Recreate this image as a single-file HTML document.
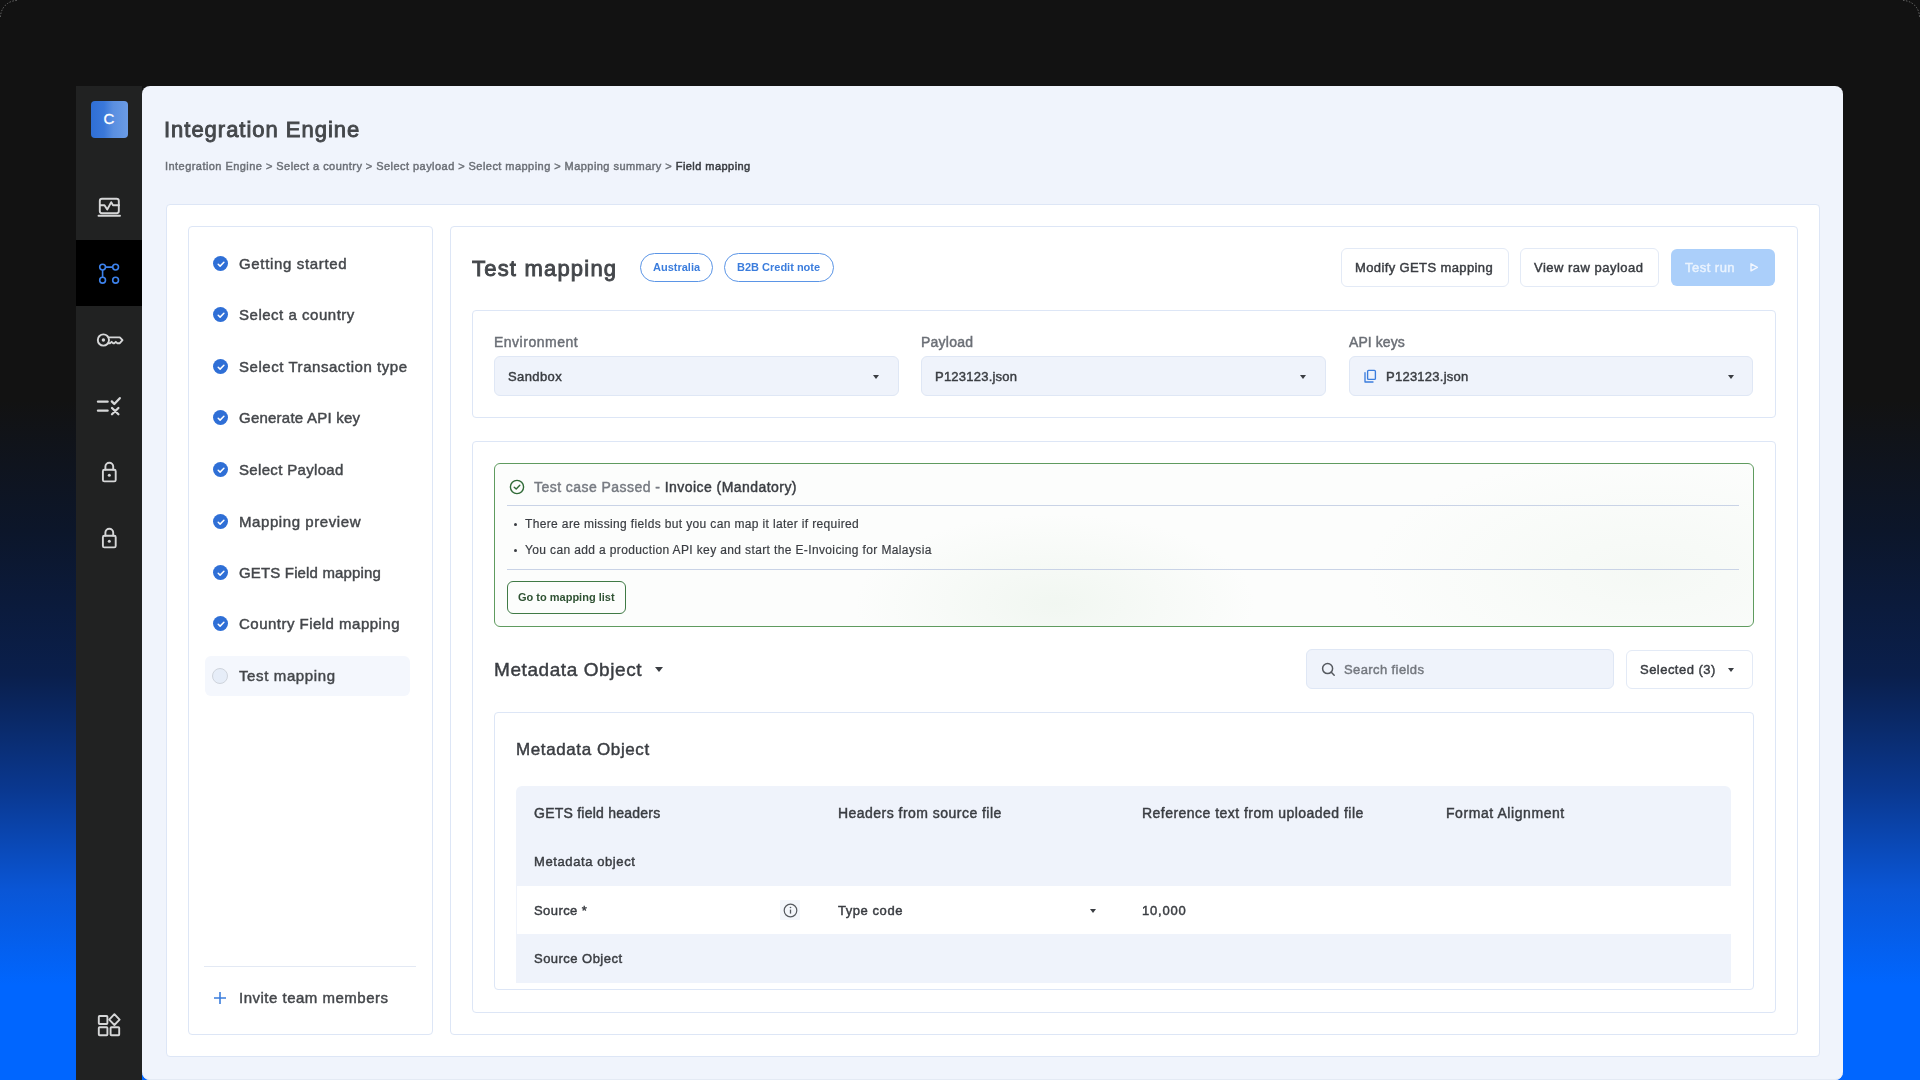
<!DOCTYPE html>
<html><head><meta charset="utf-8">
<style>
*{box-sizing:border-box;margin:0;padding:0}
html,body{width:1920px;height:1080px;overflow:hidden}
body{font-family:"Liberation Sans",sans-serif;position:relative;
background:linear-gradient(180deg,#121212 0px,#121212 400px,#0c162a 530px,#0a1f4c 675px,#0a3890 790px,#0a56d6 890px,#0066ff 985px,#0066ff 1080px);color:#404348}
.abs{position:absolute}
#sidebar{left:76px;top:86px;width:66px;height:994px;background:#212222}
#logo{left:15px;top:15px;width:37px;height:37px;border-radius:4px;background:linear-gradient(90deg,#2f6fd6 0%,#3a78da 35%,#5a8fe0 60%,#6b9ce6 100%);color:#fff;font-size:15px;-webkit-text-stroke:0.3px #fff;text-align:center;line-height:37px;text-indent:-1px}
.sicon{left:0;width:66px;height:66px;display:flex;align-items:center;justify-content:center}
#main{left:142px;top:86px;width:1701px;height:994px;background:#f0f4fc;border-radius:8px;box-shadow:inset 0 -1px 0 #e4eaf4}
.t{position:absolute;white-space:nowrap;line-height:1}
.box{position:absolute;background:#fff;border:1px solid #dde6f6;border-radius:4px}
.md{-webkit-text-stroke:0.45px currentColor}
.t{will-change:transform}
.step{position:absolute;left:239px;font-size:15px;letter-spacing:0.5px;color:#44474b}
.chk{position:absolute;left:212.5px;width:15px;height:15px;border-radius:50%;background:#2f6fd6}
.chk svg{position:absolute;left:0;top:0}
.sel{position:absolute;background:#eff3fb;border:1px solid #dfe7f5;border-radius:6px;height:40px}
.caret{position:absolute;width:0;height:0;border-left:3.6px solid transparent;border-right:3.6px solid transparent;border-top:4px solid #3a3d42}
.btn{position:absolute;background:#fff;border:1px solid #e3eaf6;border-radius:6px;height:39px}
</style></head><body>
<svg class="abs" style="left:0;top:0" width="1920" height="30" viewBox="0 0 1920 30"><path d="M0.5 17A16.5 16.5 0 0 1 17 0.5" fill="none" stroke="#6a6a6a" stroke-width="1" stroke-dasharray="1.5 1.5"/><path d="M1903 0.5A16.5 16.5 0 0 1 1919.5 17" fill="none" stroke="#6a6a6a" stroke-width="1" stroke-dasharray="1.5 1.5"/></svg>
<div id="sidebar" class="abs">
  <div id="logo" class="abs"><span style="position:relative;top:-1px">C</span></div>
  <div class="sicon abs" style="top:88px"></div>
  <div class="sicon abs" style="top:154px;background:#000"></div>
</div>
<svg class="abs" style="left:76px;top:86px" width="66" height="994" viewBox="76 86 66 994">
<g fill="none" stroke="#d6d7d8" stroke-width="1.9" stroke-linecap="round" stroke-linejoin="round">
 <rect x="99.8" y="198.8" width="19" height="14.4" rx="2.2"/>
 <path d="M98.5 215.8H120"/>
 <path d="M100 205.3H104.5L107.2 209.6L111.2 202.2L113 205.3H119"/>
 <circle cx="103.4" cy="340" r="5.6"/>
 <path d="M108.6 337.4H119.8L122.5 340.2L119.8 343.2H117.2L115.8 341.8L114.4 343.2H113L111.6 341.8L110.2 343.2H108.6"/>
 <path d="M98 401.6H107.6M98 410.6H107.6" stroke-width="2.4"/>
 <path d="M111.8 401.4L114.3 404L119.8 398.2" stroke-width="2.3"/>
 <path d="M112 408L118.4 414.3M118.4 408L112 414.3" stroke-width="2.3"/>
 <rect x="102.9" y="469.8" width="12.8" height="11.6" rx="1.5"/>
 <path d="M105.4 469.6V466.6A3.9 3.9 0 0 1 113.2 466.6V469.6"/>
 <rect x="102.9" y="535.8" width="12.8" height="11.6" rx="1.5"/>
 <path d="M105.4 535.6V532.6A3.9 3.9 0 0 1 113.2 532.6V535.6"/>
 <rect x="98.8" y="1016" width="8.6" height="8" rx="0.8"/>
 <rect x="98.8" y="1027.2" width="8.6" height="8" rx="0.8"/>
 <rect x="110.6" y="1027.2" width="8.6" height="8" rx="0.8"/>
 <path d="M114.4 1014.2L119.6 1019.6L114.4 1025L109.2 1019.6Z"/>
</g>
<circle cx="103.4" cy="340" r="1.7" fill="#d6d7d8"/>
<circle cx="109.3" cy="475.3" r="1.5" fill="#d6d7d8"/>
<circle cx="109.3" cy="541.3" r="1.5" fill="#d6d7d8"/>
<g fill="none" stroke="#3d82ec" stroke-width="1.6">
 <circle cx="102.6" cy="267.1" r="2.9"/>
 <circle cx="115.6" cy="267.1" r="2.9"/>
 <circle cx="102.6" cy="280.2" r="2.9"/>
 <circle cx="115.6" cy="280.2" r="2.9"/>
 <path d="M105.5 267.1H112.7M102.6 270V277.3"/>
</g>
</svg>
<div id="main" class="abs"></div>
<div class="t" style="left:164px;top:119px;font-size:22px;letter-spacing:0.98px;-webkit-text-stroke:0.9px currentColor;color:#44474b">Integration Engine</div>
<div class="t md" style="left:165px;top:161px;font-size:11px;letter-spacing:0.45px;color:#6c7077">Integration Engine &gt; Select a country &gt; Select payload &gt; Select mapping &gt; Mapping summary &gt; <span style="color:#3a3d42;-webkit-text-stroke:0.5px #3a3d42">Field mapping</span></div>

<div class="box" style="left:166px;top:204px;width:1654px;height:853px"></div>
<div class="box" style="left:188px;top:226px;width:245px;height:809px"></div>
<div class="box" style="left:450px;top:226px;width:1348px;height:809px"></div>
<div class="box" style="left:472px;top:310px;width:1304px;height:108px"></div>
<div class="box" style="left:472px;top:441px;width:1304px;height:572px"></div>
<div class="box" style="left:494px;top:712px;width:1260px;height:278px"></div>

<!-- STEPS -->
<div class="chk" style="top:256px"><svg width="16" height="16" viewBox="0 0 16 16"><path d="M5.2 8.3 L7.1 10.1 L10.9 6.3" fill="none" stroke="#fff" stroke-width="1.5" stroke-linecap="round" stroke-linejoin="round"/></svg></div>
<div class="t step md" style="top:256px;letter-spacing:0.66px">Getting started</div>
<div class="chk" style="top:307px"><svg width="16" height="16" viewBox="0 0 16 16"><path d="M5.2 8.3 L7.1 10.1 L10.9 6.3" fill="none" stroke="#fff" stroke-width="1.5" stroke-linecap="round" stroke-linejoin="round"/></svg></div>
<div class="t step md" style="top:307px;letter-spacing:0.52px">Select a country</div>
<div class="chk" style="top:359px"><svg width="16" height="16" viewBox="0 0 16 16"><path d="M5.2 8.3 L7.1 10.1 L10.9 6.3" fill="none" stroke="#fff" stroke-width="1.5" stroke-linecap="round" stroke-linejoin="round"/></svg></div>
<div class="t step md" style="top:359px;letter-spacing:0.55px">Select Transaction type</div>
<div class="chk" style="top:410px"><svg width="16" height="16" viewBox="0 0 16 16"><path d="M5.2 8.3 L7.1 10.1 L10.9 6.3" fill="none" stroke="#fff" stroke-width="1.5" stroke-linecap="round" stroke-linejoin="round"/></svg></div>
<div class="t step md" style="top:410px;letter-spacing:0.23px">Generate API key</div>
<div class="chk" style="top:462px"><svg width="16" height="16" viewBox="0 0 16 16"><path d="M5.2 8.3 L7.1 10.1 L10.9 6.3" fill="none" stroke="#fff" stroke-width="1.5" stroke-linecap="round" stroke-linejoin="round"/></svg></div>
<div class="t step md" style="top:462px;letter-spacing:0.33px">Select Payload</div>
<div class="chk" style="top:514px"><svg width="16" height="16" viewBox="0 0 16 16"><path d="M5.2 8.3 L7.1 10.1 L10.9 6.3" fill="none" stroke="#fff" stroke-width="1.5" stroke-linecap="round" stroke-linejoin="round"/></svg></div>
<div class="t step md" style="top:514px;letter-spacing:0.58px">Mapping preview</div>
<div class="chk" style="top:565px"><svg width="16" height="16" viewBox="0 0 16 16"><path d="M5.2 8.3 L7.1 10.1 L10.9 6.3" fill="none" stroke="#fff" stroke-width="1.5" stroke-linecap="round" stroke-linejoin="round"/></svg></div>
<div class="t step md" style="top:565px;letter-spacing:0.16px">GETS Field mapping</div>
<div class="chk" style="top:616px"><svg width="16" height="16" viewBox="0 0 16 16"><path d="M5.2 8.3 L7.1 10.1 L10.9 6.3" fill="none" stroke="#fff" stroke-width="1.5" stroke-linecap="round" stroke-linejoin="round"/></svg></div>
<div class="t step md" style="top:616px;letter-spacing:0.48px">Country Field mapping</div>
<div class="abs" style="left:205px;top:656px;width:205px;height:40px;border-radius:6px;background:#f4f7fd"></div>
<div class="abs" style="left:212px;top:668px;width:16px;height:16px;border-radius:50%;background:#e6edf8;border:1px solid #cfd4dc"></div>
<div class="t step md" style="top:668px;letter-spacing:0.62px">Test mapping</div>
<div class="abs" style="left:204px;top:966px;width:212px;height:1px;background:#e3e9f4"></div>
<svg class="abs" style="left:213px;top:991px" width="14" height="14" viewBox="0 0 14 14"><path d="M7 1V13M1 7H13" stroke="#3b7ddd" stroke-width="1.6"/></svg>
<div class="t step md" style="top:990px;letter-spacing:0.5px">Invite team members</div>
<!-- HEADER -->
<div class="t" style="left:472px;top:258px;font-size:22px;letter-spacing:1.2px;-webkit-text-stroke:0.9px currentColor;color:#44474b">Test mapping</div>
<div class="abs" style="left:640px;top:253px;width:73px;height:29px;border:1px solid #5b95e6;border-radius:15px"></div>
<div class="t" style="left:653px;top:262px;font-size:11px;font-weight:bold;color:#3b7ddd">Australia</div>
<div class="abs" style="left:724px;top:253px;width:110px;height:29px;border:1px solid #5b95e6;border-radius:15px"></div>
<div class="t" style="left:737px;top:262px;font-size:11px;font-weight:bold;color:#3b7ddd">B2B Credit note</div>
<div class="btn" style="left:1341px;top:248px;width:168px"></div>
<div class="t md" style="left:1355px;top:261px;font-size:13px;letter-spacing:0.38px;color:#3a3d42">Modify GETS mapping</div>
<div class="btn" style="left:1520px;top:248px;width:139px"></div>
<div class="t md" style="left:1534px;top:261px;font-size:13px;letter-spacing:0.49px;color:#3a3d42">View raw payload</div>
<div class="abs" style="left:1671px;top:249px;width:104px;height:37px;border-radius:6px;background:#abcffa"></div>
<div class="t md" style="left:1685px;top:261px;font-size:13px;letter-spacing:0.48px;color:#eaf3fe">Test run</div>
<svg class="abs" style="left:1748px;top:261px" width="12" height="12" viewBox="0 0 12 12"><path d="M3 2.8 L9.4 6.3 L3 9.8 Z" fill="none" stroke="#f2f7ff" stroke-width="1.4" stroke-linejoin="round"/></svg>
<!-- ENV -->
<div class="t md" style="left:494px;top:335px;font-size:14px;letter-spacing:0.5px;color:#6b6f76">Environment</div>
<div class="sel" style="left:494px;top:356px;width:405px"></div>
<div class="t md" style="left:508px;top:370px;font-size:13px;letter-spacing:0.4px;color:#3a3d42">Sandbox</div>
<div class="caret" style="left:872.5px;top:375px"></div>
<div class="t md" style="left:921px;top:335px;font-size:14px;letter-spacing:0.23px;color:#6b6f76">Payload</div>
<div class="sel" style="left:921px;top:356px;width:405px"></div>
<div class="t md" style="left:935px;top:370px;font-size:13px;letter-spacing:0.23px;color:#3a3d42">P123123.json</div>
<div class="caret" style="left:1300px;top:375px"></div>
<div class="t md" style="left:1349px;top:335px;font-size:14px;letter-spacing:0.07px;color:#6b6f76">API keys</div>
<div class="sel" style="left:1349px;top:356px;width:404px"></div>
<svg class="abs" style="left:1358px;top:362px" width="30" height="28" viewBox="1358 362 30 28"><rect x="1367.6" y="370.4" width="7.8" height="9" rx="1" fill="none" stroke="#3b7ddd" stroke-width="1.35"/><path d="M1365 372.6V382H1373" fill="none" stroke="#3b7ddd" stroke-width="1.35" stroke-linecap="round" stroke-linejoin="round"/></svg>
<div class="t md" style="left:1386px;top:370px;font-size:13px;letter-spacing:0.25px;color:#3a3d42">P123123.json</div>
<div class="caret" style="left:1727.5px;top:375px"></div>
<!-- TESTCASE -->
<div class="abs" style="left:494px;top:463px;width:1260px;height:164px;border:1px solid #5f9b5f;border-radius:6px;background:radial-gradient(ellipse 200px 90px at 560px 140px,rgba(228,239,228,0.45),rgba(255,255,255,0)),radial-gradient(ellipse 280px 120px at 1150px 110px,rgba(232,241,232,0.35),rgba(255,255,255,0)),#fcfdfc"></div>
<svg class="abs" style="left:509px;top:479px" width="16" height="16" viewBox="0 0 16 16"><circle cx="8" cy="8" r="6.6" fill="none" stroke="#2f6a36" stroke-width="1.4"/><path d="M5.2 8.2 L7.2 10.1 L10.8 6.3" fill="none" stroke="#2f6a36" stroke-width="1.4" stroke-linecap="round" stroke-linejoin="round"/></svg>
<div class="t md" style="left:534px;top:480px;font-size:14px;letter-spacing:0.45px;color:#777b82">Test case Passed - <span style="color:#3a3d42">Invoice (Mandatory)</span></div>
<div class="abs" style="left:507px;top:505px;width:1232px;height:1px;background:#c9d3e6"></div>
<div class="abs" style="left:514px;top:523px;width:3px;height:3px;border-radius:50%;background:#3a3d42"></div>
<div class="t" style="-webkit-text-stroke:0.2px currentColor;left:525px;top:518px;font-size:12px;letter-spacing:0.36px;color:#3a3d42">There are missing fields but you can map it later if required</div>
<div class="abs" style="left:514px;top:549px;width:3px;height:3px;border-radius:50%;background:#3a3d42"></div>
<div class="t" style="-webkit-text-stroke:0.2px currentColor;left:525px;top:544px;font-size:12px;letter-spacing:0.37px;color:#3a3d42">You can add a production API key and start the E-Invoicing for Malaysia</div>
<div class="abs" style="left:507px;top:569px;width:1232px;height:1px;background:#c9d3e6"></div>
<div class="abs" style="left:507px;top:581px;width:119px;height:33px;border:1px solid #3f7a45;border-radius:6px"></div>
<div class="t" style="left:518px;top:592px;font-size:11px;font-weight:bold;color:#2f5233">Go to mapping list</div>
<!-- META -->
<div class="t md" style="left:494px;top:660px;font-size:19px;letter-spacing:0.58px;color:#3a3d42">Metadata Object</div>
<div class="caret" style="left:655px;top:667px;border-left-width:4.5px;border-right-width:4.5px;border-top-width:5px;border-top-color:#3a3d42"></div>
<div class="sel" style="left:1306px;top:649px;width:308px;height:40px"></div>
<svg class="abs" style="left:1321px;top:662px" width="15" height="15" viewBox="0 0 15 15"><circle cx="6.6" cy="6.6" r="5" fill="none" stroke="#55595f" stroke-width="1.5"/><path d="M10.3 10.3 L13.2 13.2" stroke="#55595f" stroke-width="1.5" stroke-linecap="round"/></svg>
<div class="t md" style="left:1344px;top:663px;font-size:13px;letter-spacing:0.4px;color:#74787f">Search fields</div>
<div class="btn" style="left:1626px;top:650px;width:127px;height:39px"></div>
<div class="t md" style="left:1640px;top:663px;font-size:13px;letter-spacing:0.47px;color:#3a3d42">Selected (3)</div>
<div class="caret" style="left:1727.5px;top:668px"></div>
<div class="t md" style="left:516px;top:741px;font-size:17px;letter-spacing:0.6px;color:#3a3d42">Metadata Object</div>
<div class="abs" style="left:516px;top:786px;width:1215px;height:197px;background:#eff3fb;border-radius:6px 6px 0 0"></div>
<div class="abs" style="left:517px;top:886px;width:1214px;height:48px;background:#fff"></div>
<div class="t md" style="left:534px;top:806px;font-size:14px;letter-spacing:0.24px;color:#3a3d42">GETS field headers</div>
<div class="t md" style="left:838px;top:806px;font-size:14px;letter-spacing:0.47px;color:#3a3d42">Headers from source file</div>
<div class="t md" style="left:1142px;top:806px;font-size:14px;letter-spacing:0.47px;color:#3a3d42">Reference text from uploaded file</div>
<div class="t md" style="left:1446px;top:806px;font-size:14px;letter-spacing:0.57px;color:#3a3d42">Format Alignment</div>
<div class="t md" style="left:534px;top:855px;font-size:13px;letter-spacing:0.6px;color:#3a3d42">Metadata object</div>
<div class="t md" style="left:534px;top:904px;font-size:13px;letter-spacing:0.42px;color:#3a3d42">Source *</div>
<div class="abs" style="left:780px;top:900px;width:20px;height:20px;border-radius:1px;background:#f3f6fb"></div>
<svg class="abs" style="left:782px;top:902px" width="17" height="17" viewBox="0 0 17 17"><circle cx="8.5" cy="8.5" r="6.3" fill="none" stroke="#55595f" stroke-width="1.2"/><path d="M8.5 7.6V11.6" stroke="#55595f" stroke-width="1.3"/><circle cx="8.5" cy="5.5" r="0.8" fill="#55595f"/></svg>
<div class="t md" style="left:838px;top:904px;font-size:13px;letter-spacing:0.55px;color:#3a3d42">Type code</div>
<div class="caret" style="left:1090px;top:909px"></div>
<div class="t md" style="left:1142px;top:904px;font-size:13px;letter-spacing:0.77px;color:#3a3d42">10,000</div>
<div class="t md" style="left:534px;top:952px;font-size:13px;letter-spacing:0.47px;color:#3a3d42">Source Object</div>
</body></html>
